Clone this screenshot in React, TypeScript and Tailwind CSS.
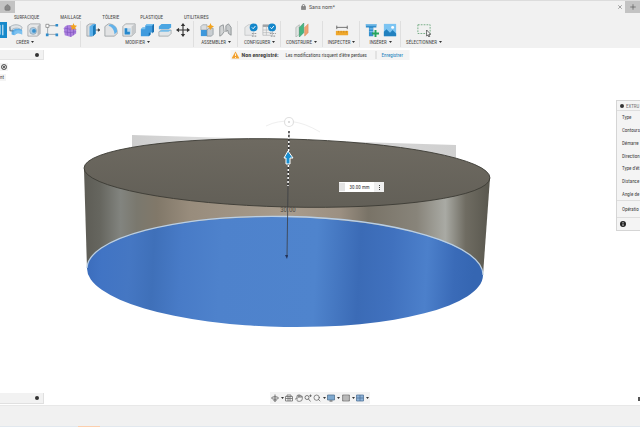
import React from 'react';
import { House, Plus, X, Hand, Search } from 'lucide-react';

interface ToolGroup {
  label: string;
  className: string;
  icons: { name: string; icon: React.ReactNode; active?: boolean }[];
}

const tabs = ['SURFACIQUE', 'MAILLAGE', 'TÔLERIE', 'PLASTIQUE', 'UTILITAIRES'];

const Icon = ({ children }: { children: React.ReactNode }) => (
  <svg viewBox="0 0 16 16" className="w-[14px] h-[14px]" fill="none">
    {children}
  </svg>
);

const Extrude = (
  <Icon>
    <path d="M8 4L11 2V13L8 15Z" fill="#bfe4fa" />
    <path d="M13.500 2V14" stroke="#e9f6fd" strokeWidth="1.200" />
  </Icon>
);

const Revolve = (
  <Icon>
    <path d="M1 5C4 1 12 1 15 5L14 8C11 5 5 5 2 9Z" fill="#dfe3e6" stroke="#8796a2" strokeWidth=".7" />
    <path d="M3 9C6 6 12 6 15 8V13C12 11 9 11 6 14L3 13Z" fill="#5eb0ea" />
    <path d="M6 10C9 8 12 8 15 9V13C12 11 9 11 6 14Z" fill="#7cc1ef" />
    <path d="M1 4V9H5" stroke="#4b6578" strokeWidth=".9" />
  </Icon>
);

const Hole = (
  <Icon>
    <path d="M1 3L4 1H15V12L12 15H1Z" fill="#e6e7e8" stroke="#969a9d" strokeWidth=".8" />
    <path d="M12 4L15 1V12L12 15Z" fill="#b7babc" />
    <circle cx="7" cy="9" r="4" fill="#a7cbe5" stroke="#88949d" strokeWidth=".6" />
    <circle cx="8" cy="9" r="2.200" fill="#3a91cd" />
  </Icon>
);

const Sketch = (
  <Icon>
    <path d="M3 3H13M3 13H13M3 3V13" stroke="#98a2a9" strokeWidth="1" />
    <path d="M1 1.500H4.500V5H1Z" fill="#fff" stroke="#777" strokeWidth=".8" />
    <path d="M12 1H15V4H12ZM1 12H4V15H1ZM12 12H15V15H12Z" fill="#2f8ccc" />
  </Icon>
);

const Mesh = (
  <Icon>
    <path d="M1 6C3 2 8 1 12 4L15 7V12L9 16L2 14Z" fill="#ab80de" />
    <path d="M2 6L8 7L14 6M8 7L9 16M1 10L8 11L15 10M5 3V14M12 6V14" stroke="#7d50bd" strokeWidth=".7" />
    <path d="M12 0L13 2.500L16 3L14 5L14.500 8L12 6.500L9.500 8L10 5L8 3L11 2.500Z" fill="#f2a31f" />
  </Icon>
);

const PressPull = (
  <Icon>
    <path d="M1 3L4 1H10V13L7 15H1Z" fill="#d9dcde" stroke="#858b90" strokeWidth=".7" />
    <path d="M4 4L8 1H11V12L7 15H4Z" fill="#5cb0ea" />
    <path d="M8 4L11 1V12L8 15Z" fill="#1878b7" />
    <path d="M11 8H15M14 6.500L16 8L14 9.500Z" stroke="#333" strokeWidth=".7" fill="#333" />
  </Icon>
);

const Fillet = (
  <Icon>
    <path d="M1 4L5 1C11 1 15 5 15 10V12L12 15H1Z" fill="#e2e3e4" stroke="#8b9093" strokeWidth=".8" />
    <path d="M5 3L7 1.500C12 2 15 5 15 10L12 13C12 8 9 4 5 3Z" fill="#62b2ea" />
  </Icon>
);

const Shell = (
  <Icon>
    <path d="M1 4L4 1H15V11L11 15H1Z" fill="#e9eaeb" stroke="#8f9497" strokeWidth=".8" />
    <path d="M11 4L15 1V11L11 15Z" fill="#c6c9cb" />
    <path d="M3 6H10V13H3Z" fill="#b8d7ec" />
    <path d="M3 6V13H9V10H6V6Z" fill="#2688cc" />
  </Icon>
);

const Combine = (
  <Icon>
    <path d="M6 3L8 1H16V10L12 11V13L10 15H1V7L3 5H6Z" fill="#3f9bde" />
    <path d="M6 3L8 1H16L14 3ZM1 7L3 5H6V7Z" fill="#76c0ef" />
    <path d="M14 3L16 1V10L14 12ZM10 11H12V13L10 15Z" fill="#176eae" />
  </Icon>
);

const OffsetFace = (
  <Icon>
    <path d="M1 4L4 1H15V5L12 7H1Z" fill="#4ba5e2" />
    <path d="M1 10L4 8H15V12L12 15H1Z" fill="#e2e5e7" stroke="#8c9194" strokeWidth=".7" />
    <path d="M1 10L4 8H15L12 10Z" fill="#75bce9" />
  </Icon>
);

const Move = (
  <Icon>
    <path d="M8 2V14M2 8H14" stroke="#333" strokeWidth="1.300" />
    <path d="M8 0L10.500 3.500H5.500ZM8 16L10.500 12.500H5.500ZM0 8L3.500 5.500V10.500ZM16 8L12.500 5.500V10.500Z" fill="#333" />
  </Icon>
);

const Assemble = (
  <Icon>
    <path d="M1 4L3 2H8V8H1Z" fill="#d9dcdf" stroke="#8e959a" strokeWidth=".7" />
    <path d="M1 8H8V15H1Z" fill="#3d98dc" />
    <path d="M8 8L10 6H15V13L13 15H8Z" fill="#c9ced2" stroke="#7f888e" strokeWidth=".7" />
    <path d="M12 0L13 2.500L16 4L13.500 5.500L12 8L10.500 5.500L8 4L11 2.500Z" fill="#f2a31f" />
  </Icon>
);

const Joint = (
  <Icon>
    <path d="M2 4L6 2L7 10L4 14L2 15Z" fill="#d2d4d5" stroke="#83888b" strokeWidth=".9" />
    <path d="M9 3L12 1L15 5V14L12 12L11 8L9 10Z" fill="#c6c9cb" stroke="#83888b" strokeWidth=".9" />
  </Icon>
);

const Configure = (
  <Icon>
    <path d="M1 5L5 2H11V14H1Z" fill="#e8e9ea" stroke="#b3b6b8" strokeWidth=".7" />
    <circle cx="11" cy="5" r="4.500" fill="#1387cb" />
    <path d="M9 5L10.500 6.500L13 3.500" stroke="#fff" strokeWidth="1.100" />
    <path d="M9 12H15M9 15H15" stroke="#9a9da0" strokeWidth="1.200" strokeDasharray="2 1" />
  </Icon>
);

const ConfigTable = (
  <Icon>
    <path d="M1 2H12V14H1Z" fill="#f0f0f0" stroke="#a7aaac" strokeWidth=".7" />
    <path d="M1 2H12V4.500H1Z" fill="#9fa3a6" />
    <path d="M1 8H12M1 11H12M5 4V14" stroke="#b0b3b5" strokeWidth=".7" />
    <circle cx="11.500" cy="5" r="4.500" fill="#1387cb" />
    <path d="M9.500 5L11 6.500L13.500 3.500" stroke="#fff" strokeWidth="1.100" />
    <path d="M9 12H16M10 15H16" stroke="#9a9da0" strokeWidth="1.200" strokeDasharray="2 1" />
  </Icon>
);

const Construct = (
  <Icon>
    <path d="M1 5L5 2V13L1 16Z" fill="#e0e3e1" stroke="#9aa19d" strokeWidth=".6" />
    <path d="M5 5L10 0V11L5 16Z" fill="#45b581" stroke="#2c8e60" strokeWidth=".6" />
    <path d="M11 5L15 1V11L11 15Z" fill="#f0a172" stroke="#d58251" strokeWidth=".5" />
  </Icon>
);

const Inspect = (
  <Icon>
    <path d="M2 3V7M14 3V7M2 5H14" stroke="#555" strokeWidth=".9" />
    <path d="M1 9H15V14H1Z" fill="#efa72b" />
    <path d="M4 9V11M7 9V11M10 9V11M13 9V11" stroke="#b97c1c" strokeWidth=".7" />
  </Icon>
);

const Insert = (
  <Icon>
    <path d="M1 1H13V5H9.500V15H4.500V5H1Z" fill="#338fcd" />
    <path d="M1 1H13V3H1ZM5 6H9V7.500H5ZM5 9H9V10.500H5Z" fill="#77bce8" />
    <path d="M12 8V16M8 12H16" stroke="#26a55e" strokeWidth="2.200" />
  </Icon>
);

const Decal = (
  <Icon>
    <path d="M1 1H15V15H1Z" fill="#7cc4f2" />
    <path d="M1 10L4 7L8 11L11 8L15 12V15H1Z" fill="#2080bf" />
    <circle cx="11" cy="5" r="1.700" fill="#fff" />
  </Icon>
);

const Select = (
  <Icon>
    <path d="M1 2H15V12H1Z" stroke="#5aa06e" strokeWidth=".9" strokeDasharray="2 1.300" />
    <path d="M11 8V15L12.500 13.500L13.500 16L14.500 15.500L13.600 13H15.800Z" fill="#fff" stroke="#333" strokeWidth=".8" />
  </Icon>
);

const groups: ToolGroup[] = [
  {
    label: 'CRÉER',
    className: 'w-[81px] items-end pr-px',
    icons: [
      { name: 'Extrusion', icon: Extrude, active: true },
      { name: 'Révolution', icon: Revolve },
      { name: 'Perçage', icon: Hole },
      { name: 'Esquisse', icon: Sketch },
      { name: 'Forme', icon: Mesh },
    ],
  },
  {
    label: 'MODIFIER',
    className: 'w-[113px] items-center pl-px',
    icons: [
      { name: 'Appuyer/Tirer', icon: PressPull },
      { name: 'Congé', icon: Fillet },
      { name: 'Coque', icon: Shell },
      { name: 'Combiner', icon: Combine },
      { name: 'Décaler', icon: OffsetFace },
      { name: 'Déplacer', icon: Move },
    ],
  },
  {
    label: 'ASSEMBLER',
    className: 'w-11 items-center pl-px',
    icons: [
      { name: 'Composant', icon: Assemble },
      { name: 'Liaison', icon: Joint },
    ],
  },
  {
    label: 'CONFIGURER',
    className: 'w-[43px] items-center pl-px',
    icons: [
      { name: 'Configuration', icon: Configure },
      { name: 'Table', icon: ConfigTable },
    ],
  },
  { label: 'CONSTRUIRE', className: 'w-[42px] items-center', icons: [{ name: 'Plan', icon: Construct }] },
  { label: 'INSPECTER', className: 'w-[37px] items-center pl-px', icons: [{ name: 'Mesurer', icon: Inspect }] },
  {
    label: 'INSÉRER',
    className: 'w-[41px] items-center pl-px',
    icons: [
      { name: 'Élément', icon: Insert },
      { name: 'Image', icon: Decal },
    ],
  },
  { label: 'SÉLECTIONNER', className: 'w-[46px] items-center', icons: [{ name: 'Fenêtre', icon: Select }] },
];

const extrudeFields = ['Type', 'Contours', 'Démarre', 'Direction', "Type d'ét", 'Distance', 'Angle de'];

const Caret = () => (
  <svg viewBox="0 0 6 4" className="w-[3px] h-[2px] shrink-0">
    <path d="M0 0H6L3 4Z" fill="#333" />
  </svg>
);

function TitleBar() {
  return (
    <header className="h-[13px] flex items-start border-t border-[#dcdcdc]">
      <button aria-label="Accueil" className="w-[15px] h-[12px] bg-[#c3c3c3] flex items-center justify-center">
        <House size={7} className="text-[#777] fill-[#888]" />
      </button>
      <div className="flex-1 h-[12px] pr-1 flex items-center justify-center gap-[3px] text-[6px] text-[#555]">
        <svg viewBox="0 0 12 14" className="w-[5px] h-[6px]" fill="none">
          <path d="M3 7V4A3 3 0 0 1 9 4V7" stroke="#666" strokeWidth="1.800" />
          <path d="M1 6H11V13H1Z" fill="#888" stroke="#666" strokeWidth="1.200" />
        </svg>
        <span>Sans nom*</span>
      </div>
      <button aria-label="Fermer" className="w-[10px] h-[12px] flex items-center justify-center -ml-[10px]">
        <X size={6} className="text-[#555]" />
      </button>
      <button aria-label="Nouvel onglet" className="w-[15px] h-[12px] bg-[#c3c3c3] flex items-center justify-center">
        <Plus size={8} className="text-[#555]" />
      </button>
    </header>
  );
}

function Toolbar() {
  return (
    <div className="h-[35px] flex flex-col">
      <nav className="flex gap-[21px] pl-[14px] h-[8px] items-center">
        {tabs.map((tab) => (
          <button key={tab} className="leading-[8px]">{tab}</button>
        ))}
      </nav>
      <div className="flex h-[26px]">
        {groups.map((group) => (
          <div
            key={group.label}
            className={`shrink-0 flex flex-col ${group.className} border-r border-[#dfdfdf] last:border-r-0`}
          >
            <div className="flex h-[18px] items-center">
              {group.icons.map(({ name, icon, active }) => (
                <button
                  key={name}
                  aria-label={name}
                  className={`w-[18px] h-[16px] flex items-center justify-center ${active ? 'bg-[#1689cb]' : ''}`}
                >
                  {icon}
                </button>
              ))}
            </div>
            <button
              className={`flex items-center gap-[2px] leading-[6px] whitespace-nowrap ${
                group.label === 'CRÉER' ? 'self-start ml-[16px]' : ''
              }`}
            >
              {group.label}
              <Caret />
            </button>
          </div>
        ))}
      </div>
    </div>
  );
}

/** Extruded disc preview: top face, side wall and the selected profile. */
function Model() {
  return (
    <svg viewBox="0 48 640 357" className="absolute inset-0 w-full h-full">
      <defs>
        <linearGradient id="side" gradientUnits="userSpaceOnUse" x1="84" y1="0" x2="490" y2="0">
          <stop offset="0" stopColor="#5d5c55" />
          <stop offset=".04" stopColor="#66665f" />
          <stop offset=".09" stopColor="#82847f" />
          <stop offset=".13" stopColor="#7a786e" />
          <stop offset=".18" stopColor="#817869" />
          <stop offset=".26" stopColor="#988c7c" />
          <stop offset=".5" stopColor="#a89c8d" />
          <stop offset=".63" stopColor="#9c9082" />
          <stop offset=".7" stopColor="#797367" />
          <stop offset=".82" stopColor="#88847a" />
          <stop offset=".89" stopColor="#a9aaa4" />
          <stop offset=".94" stopColor="#6f6c62" />
          <stop offset="1" stopColor="#59574e" />
        </linearGradient>
        <linearGradient id="profile" gradientUnits="userSpaceOnUse" x1="87" y1="0" x2="483" y2="14">
          <stop offset="0" stopColor="#3869b8" />
          <stop offset=".06" stopColor="#4174c4" />
          <stop offset=".13" stopColor="#4577c3" />
          <stop offset=".19" stopColor="#3f70b9" />
          <stop offset=".26" stopColor="#487bc7" />
          <stop offset=".36" stopColor="#4e82cc" />
          <stop offset=".6" stopColor="#4f84cd" />
          <stop offset=".71" stopColor="#3b6bb6" />
          <stop offset=".79" stopColor="#4071be" />
          <stop offset=".88" stopColor="#4c80cb" />
          <stop offset=".95" stopColor="#3a6bb8" />
          <stop offset="1" stopColor="#3566b2" />
        </linearGradient>
        <linearGradient id="top" x1="0" y1="0" x2="0" y2="1">
          <stop offset="0" stopColor="#6e6a61" />
          <stop offset="1" stopColor="#625f57" />
        </linearGradient>
        <linearGradient id="plane" x1="0" y1="0" x2="1" y2="0">
          <stop offset="0" stopColor="#cecece" />
          <stop offset=".25" stopColor="#dedede" />
          <stop offset="1" stopColor="#d0d0d0" />
        </linearGradient>
      </defs>
      <path d="M132 135L456 145V162L132 152Z" fill="url(#plane)" />
      <path d="M84 169L87 269L483 275L490 178Z" fill="url(#side)" />
      <ellipse cx="287" cy="173" rx="203" ry="34" transform="rotate(1.400 287 173)" fill="url(#top)" stroke="#3d3b35" strokeWidth=".9" />
      <ellipse cx="285" cy="272" rx="198" ry="55" transform="rotate(1 285 272)" fill="url(#profile)" />
      <path d="M87 268A198 55 1 0 1 483 275" stroke="#b9cfe6" strokeWidth="1.300" fill="none" />
      <path d="M266 126Q290 114 320 132" stroke="#efefef" strokeWidth="1" fill="none" />
      <circle cx="289" cy="122" r="4.500" fill="#fff" stroke="#e0e0e0" strokeWidth="1.200" />
      <circle cx="289" cy="122" r="1" fill="#d0d0d0" />
      <path d="M288 186L287 257" stroke="#3b3d42" strokeWidth=".8" />
      <path d="M285 255H288L287 259Z" fill="#23335a" />
      <path d="M289 131L288 186" stroke="#333" strokeWidth="1.500" />
      <path d="M289 133L288 186" stroke="#fff" strokeWidth="1.500" strokeDasharray="2 2" />
      <path d="M288 151L293 158H290V164H286V158H284Z" fill="#1a8fd0" stroke="#fff" strokeWidth="1" />
      <text x="288" y="212" textAnchor="middle" fontSize="7" fill="#55514a">30.00</text>
    </svg>
  );
}

function ExtrudePanel() {
  return (
    <aside className="absolute right-0 top-[52px] w-[24px] overflow-hidden whitespace-nowrap bg-[#f4f4f4] border-l border-y border-[#d5d5d5] text-[#444]">
      <h2 className="h-[10px] pl-[3px] flex items-center gap-[2px] border-b border-[#dedede] text-[#777]">
        <span className="w-[4px] h-[4px] rounded-full bg-[#333] shrink-0" />
        EXTRU
      </h2>
      <ul className="h-[89px] flex flex-col pl-[5px]">
        {extrudeFields.map((field) => (
          <li key={field} className="flex-1 flex items-center">{field}</li>
        ))}
      </ul>
      <div className="h-[18px] pl-[5px] flex items-center border-y border-[#dedede]">Opératio</div>
      <div className="h-[12px] pl-[3px] flex items-center">
        <button aria-label="Informations">
          <svg viewBox="0 0 12 12" className="w-[6px] h-[6px]">
            <circle cx="6" cy="6" r="6" fill="#222" />
            <path d="M6 2V4M6 5V10" stroke="#fff" strokeWidth="1.600" />
          </svg>
        </button>
      </div>
    </aside>
  );
}

function NavBar() {
  return (
    <div className="absolute bottom-[1px] left-1/2 -translate-x-1/2 h-[12px] w-[100px] bg-[#f3f3f3] flex items-center justify-between px-[1px] text-[#555]">
      <button aria-label="Orbite" className="flex items-center gap-[2px]">
        <svg viewBox="0 0 16 16" className="w-[8px] h-[8px]" fill="none" stroke="#555" strokeWidth="1.600">
          <path d="M8 1V15M5 12L8 15L11 12" />
          <ellipse cx="8" cy="8" rx="7" ry="2.500" />
        </svg>
        <Caret />
      </button>
      <button aria-label="Regarder">
        <svg viewBox="0 0 16 16" className="w-[8px] h-[8px]" fill="none" stroke="#666" strokeWidth="1.500">
          <path d="M4 5V2H12V5M1 5H15V14H1ZM1 9H15M6 5V14M10 5V14" />
        </svg>
      </button>
      <button aria-label="Panoramique"><Hand size={8} /></button>
      <button aria-label="Zoom">
        <svg viewBox="0 0 16 16" className="w-[8px] h-[8px]" fill="none" stroke="#555" strokeWidth="1.500">
          <circle cx="6" cy="7" r="4" />
          <path d="M9 10L13 15M13 1V6M10.500 3.500H15.500" />
        </svg>
      </button>
      <button aria-label="Ajuster" className="flex items-center gap-[2px]"><Search size={8} /><Caret /></button>
      <button aria-label="Affichage" className="flex items-center gap-[2px]">
        <svg viewBox="0 0 16 16" className="w-[8px] h-[8px]">
          <path d="M1 2H15V12H1Z" fill="#7fa9cf" stroke="#4d6f8e" strokeWidth="1.500" />
          <path d="M5 14H11" stroke="#555" strokeWidth="2" />
        </svg>
        <Caret />
      </button>
      <button aria-label="Grille" className="flex items-center gap-[2px]">
        <svg viewBox="0 0 16 16" className="w-[8px] h-[8px]">
          <path d="M1 2H15V14H1Z" fill="#aaa" stroke="#777" strokeWidth="1.500" />
          <path d="M1 6H15M1 10H15M6 2V14M10 2V14" stroke="#ccc" />
        </svg>
        <Caret />
      </button>
      <button aria-label="Fenêtres" className="flex items-center gap-[2px]">
        <svg viewBox="0 0 16 16" className="w-[8px] h-[8px]">
          <path d="M1 2H15V14H1Z" fill="#8db2d8" stroke="#4f7297" strokeWidth="1.500" />
          <path d="M8 2V14M1 8H15" stroke="#4f7297" strokeWidth="1.500" />
        </svg>
        <Caret />
      </button>
    </div>
  );
}

const Dot = () => <span className="block w-[4px] h-[4px] rounded-full bg-[#333]" />;

export default function App() {
  return (
    <div className="min-h-screen flex flex-col overflow-hidden bg-[#f1f1f1] text-[5px] leading-[6px] text-[#444] font-['Liberation_Sans_Narrow','Roboto_Condensed',Roboto,sans-serif]">
      <TitleBar />
      <Toolbar />

      <main className="relative flex-1 bg-white">
        <Model />

        <div className="absolute left-0 top-[2px] flex flex-col items-start gap-[3px]">
          <button aria-label="Navigateur" className="w-11 h-[10px] bg-[#f2f2f2] border-r border-b border-[#e4e4e4] flex items-center justify-end pr-[4px]">
            <Dot />
          </button>
          <label className="h-[8px] w-[8px] flex items-center justify-center bg-[#f4f4f4]">
            <input
              type="radio"
              defaultChecked
              aria-label="Activer le composant"
              className="appearance-none w-[6px] h-[6px] rounded-full border border-[#666] bg-white checked:bg-[#333] checked:shadow-[inset_0_0_0_1px_#fff]"
            />
          </label>
          <span className="h-[7px] w-[6px] bg-[#f4f4f4] leading-[7px]">nt</span>
        </div>

        <div role="status" className="absolute left-1/2 -translate-x-1/2 top-[2px] h-[10px] w-[179px] bg-[#f4f4f4] flex items-center whitespace-nowrap">
          <svg viewBox="0 0 16 16" className="w-[8px] h-[8px] ml-px">
            <path d="M8 1L16 15H0Z" fill="#f2a02c" />
            <path d="M8 5V10M8 12V14" stroke="#fff" strokeWidth="1.600" />
          </svg>
          <strong className="ml-[2px] w-[44px] text-[6px]">Non enregistré:</strong>
          <span className="w-[90px]">Les modifications risquent d'être perdues</span>
          <button className="h-[8px] pl-[5px] border-l border-[#d0d0d0] text-[#1b82bd]">Enregistrer</button>
        </div>

        <div className="absolute left-[339px] top-[134px] w-[45px] h-[10px] bg-[#fafafa] flex items-center">
          <span className="w-[6px] h-[8px] bg-[#e3e3e3]" />
          <input
            aria-label="Distance"
            defaultValue="30.00 mm"
            className="w-[29px] min-w-0 h-[10px] bg-white text-center text-[5px] text-[#333] outline-none"
          />
          <button aria-label="Options" className="flex-1 h-[10px] bg-[#efefef] flex flex-col items-center justify-center gap-px">
            <span className="w-px h-px bg-[#444]" />
            <span className="w-px h-px bg-[#444]" />
            <span className="w-px h-px bg-[#444]" />
          </button>
        </div>

        <ExtrudePanel />

        <button aria-label="Commentaires" className="absolute left-0 bottom-[1px] w-11 h-[11px] bg-[#f2f2f2] border-r border-b border-[#e0e0e0] flex items-center justify-end pr-[4px]">
          <Dot />
        </button>
        <NavBar />
        <button aria-label="Déplacer le panneau" className="absolute right-0 bottom-[4px] w-[2px] h-[4px] bg-[#555]" />
      </main>

      <footer className="h-[22px] border-t border-[#e8e8e8] flex items-end">
        <div className="h-px w-full bg-[#e2e8ee] pl-[78px]">
          <div className="h-px w-[22px] bg-[#fbcfae]" />
        </div>
      </footer>
    </div>
  );
}
